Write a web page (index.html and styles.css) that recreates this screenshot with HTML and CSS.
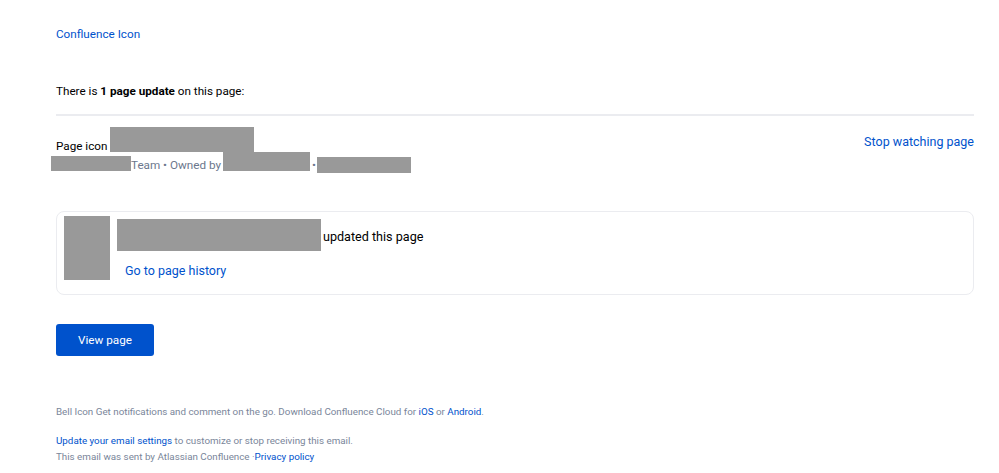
FILE: index.html
```html
<!DOCTYPE html>
<html>
<head>
<meta charset="utf-8">
<link rel="stylesheet" href="styles.css">
</head>
<body>
<div class="wrap">
  <div class="logo"><a href="#">Confluence Icon</a></div>
  <p class="intro">There is <b>1 page update</b> on this page:</p>
  <hr class="divider">
  <div class="page-row">
    <div class="page-info">
      <div class="title-line"><span class="pi">Page icon</span> <span class="redact r-title"></span></div>
      <div class="meta-line"><span class="redact r-space"></span><span class="mt">Team • Owned by</span><span class="redact r-owner"></span><span class="dot">•</span><span class="redact r-date"></span></div>
    </div>
    <a class="stop" href="#">Stop watching page</a>
  </div>
  <div class="card">
    <span class="redact avatar"></span>
    <div class="card-body">
      <div class="who"><span class="redact r-name"></span><span class="upd">updated this page</span></div>
      <a class="history" href="#">Go to page history</a>
    </div>
  </div>
  <a class="btn" href="#">View page</a>
  <div class="footer">
    <p class="mobile"><span class="bell">Bell Icon</span> Get notifications and comment on the go. Download Confluence Cloud for <a href="#">iOS</a> or <a href="#">Android</a>.</p>
    <p class="settings"><a href="#">Update your email settings</a> to customize or stop receiving this email.</p>
    <p class="sent">This email was sent by Atlassian Confluence ·<a href="#">Privacy policy</a></p>
  </div>
</div>
</body>
</html>
```
FILE: styles.css
```css
* { box-sizing: border-box; }
html, body { margin: 0; padding: 0; background: #fff; }
body { font-family: Roboto, "Liberation Sans", sans-serif; color: #172b4d; }
a { color: #0052cc; text-decoration: none; }
.wrap { width: 918px; margin-left: 56px; padding-top: 26px; }
.logo { font-size: 11.7px; line-height: 16px; }
.intro { margin: 41px 0 0; font-size: 11.7px; line-height: 16px; color: #000; }
.intro b { font-weight: 700; }
.divider { margin: 15px 0 0; border: 0; border-top: 2px solid #ebecf0; height: 0; }
.page-row { display: flex; justify-content: space-between; align-items: flex-start; margin-top: 11px; }
.page-info { font-size: 11.7px; }
.title-line { display: flex; align-items: flex-end; color: #000; line-height: 16px; }
.pi { margin-bottom: -2px; }
.title-line .r-title { margin-left: 3px; }
.redact { display: inline-block; background: #999; flex: none; }
.r-title { width: 144px; height: 25px; }
.meta-line { display: flex; align-items: flex-start; margin-left: -5px; color: #6b778c; line-height: 16px; height: 21px; }
.r-space { width: 80px; height: 15px; margin-top: 4px; }
.mt { margin-top: 5px; }
.r-owner { width: 87px; height: 19px; margin-left: 2px; }
.r-date { width: 94px; height: 16px; margin-top: 5px; }
.dot { margin: 5px 1px 0 2px; }
.stop { font-size: 12.5px; line-height: 16px; margin-top: 7px; }
.card { margin-top: 38px; border: 1px solid #ebecf0; border-radius: 8px; display: flex; padding: 4px 7px 13px; height: 84px; }
.avatar { width: 46px; height: 64px; }
.card-body { margin-left: 7px; padding-top: 3px; }
.who { display: flex; align-items: flex-end; }
.r-name { width: 204px; height: 32px; }
.upd { font-size: 12.6px; color: #000; line-height: 16px; margin-left: 2px; margin-bottom: 6px; }
.history { display: block; font-size: 12.5px; margin-left: 8px; margin-top: 12px; line-height: 16px; }
.btn { display: inline-block; margin-top: 29px; background: #0052cc; color: #fff; font-size: 11.7px; width: 98px; height: 32px; line-height: 32px; text-align: center; border-radius: 3px; }
.footer { margin-top: 48px; font-size: 9.8px; color: #7a869a; line-height: 16px; }
.footer p { margin: 0; }
.bell { font-size: 9.8px; }
.settings { margin-top: 13px !important; }
```
